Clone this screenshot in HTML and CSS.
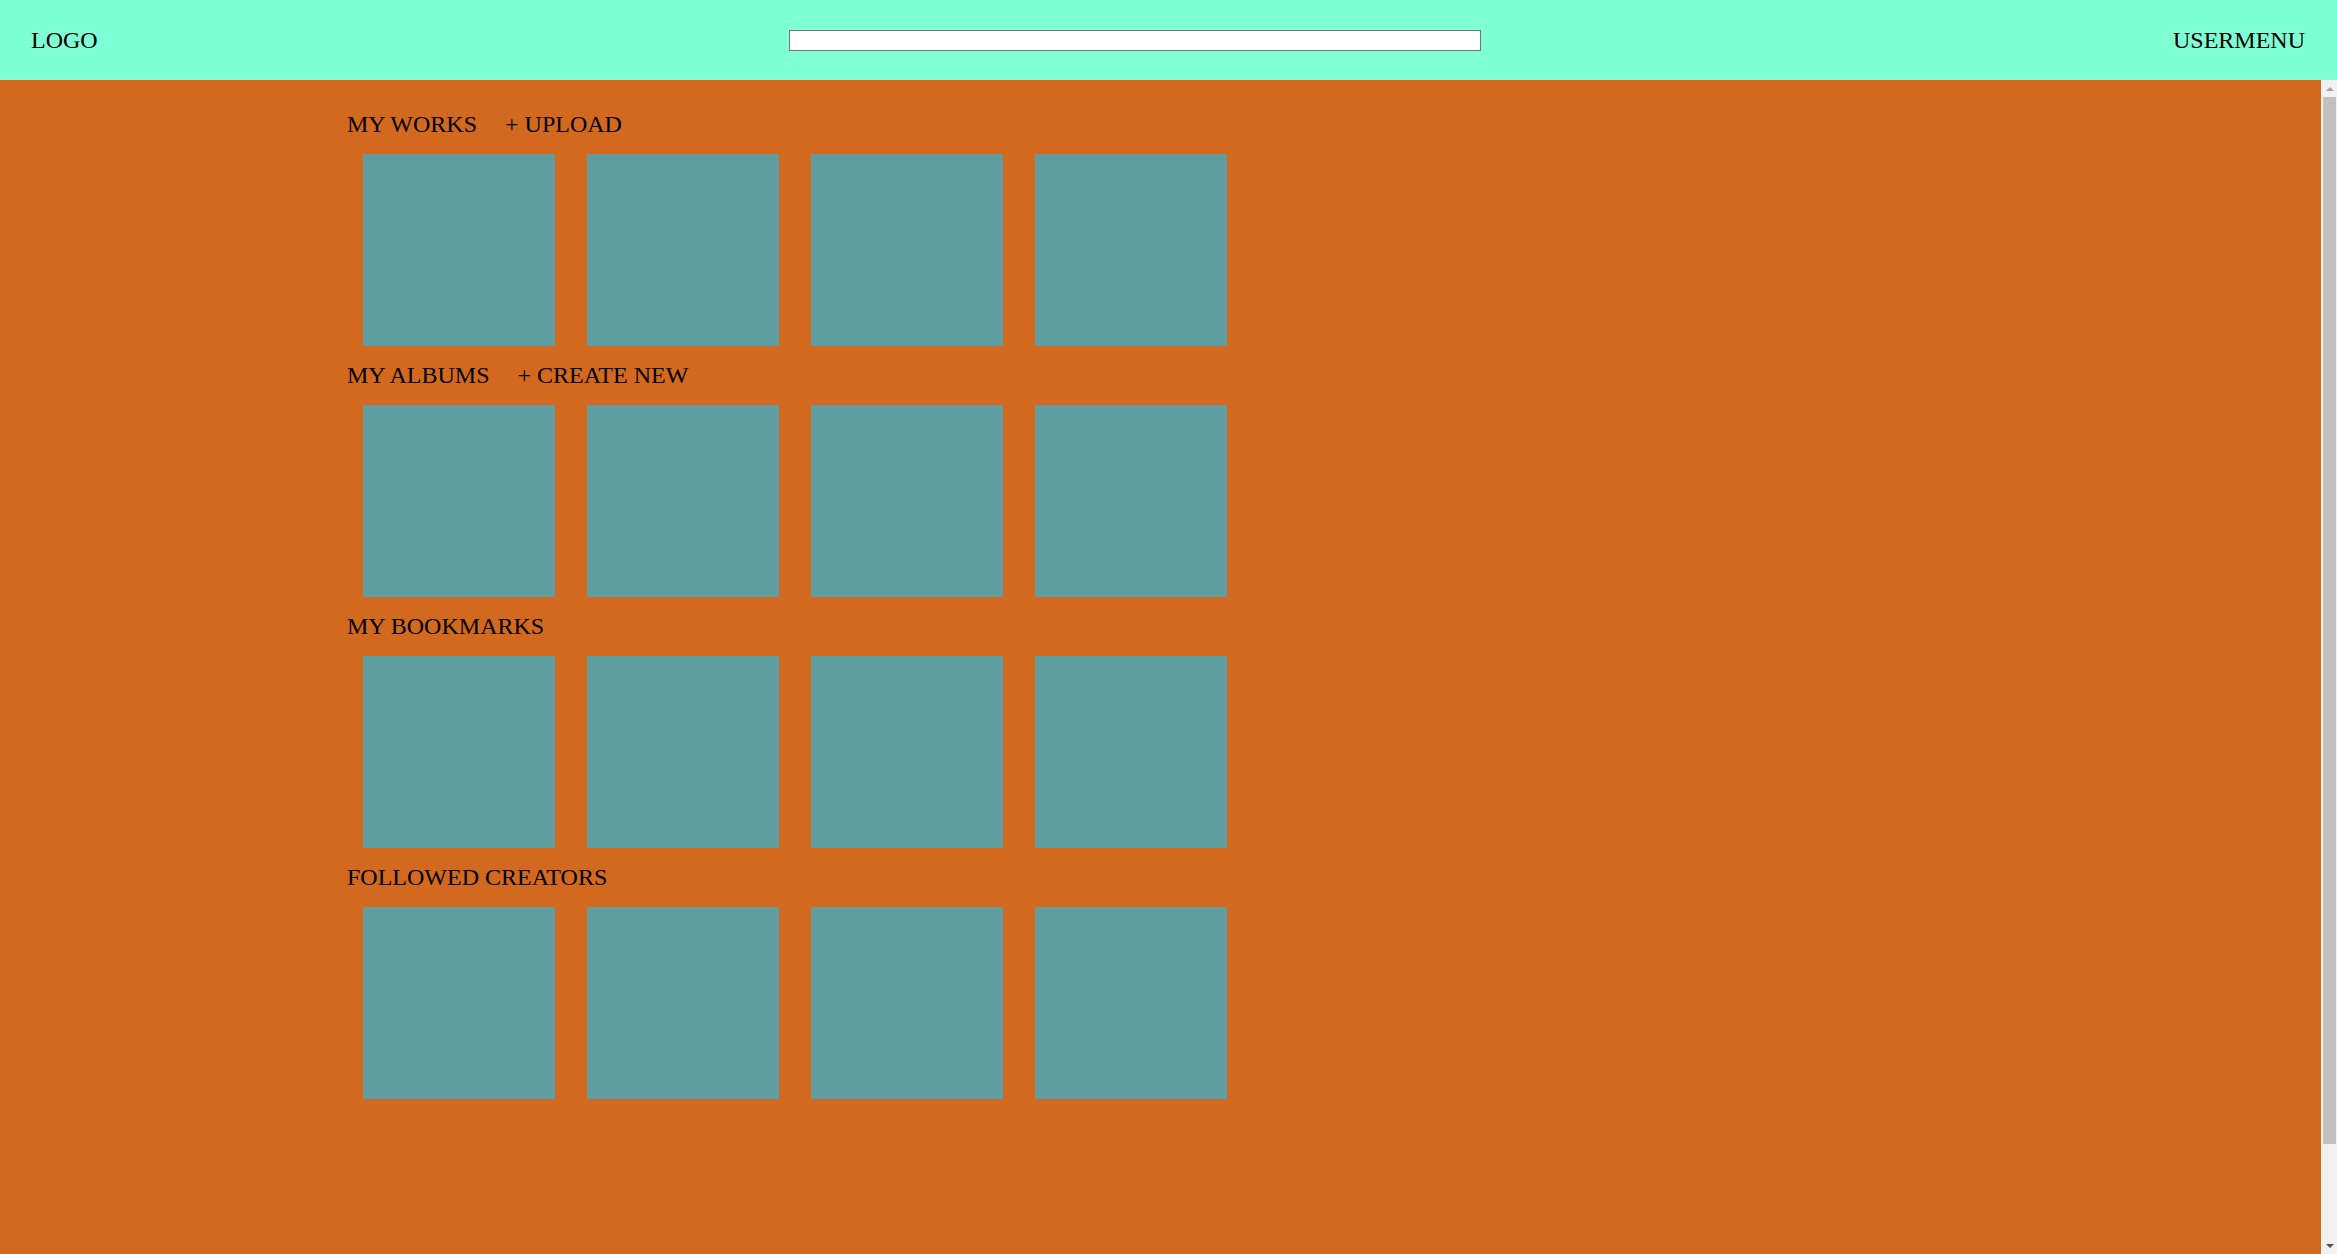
FILE: index.html
```html
<!DOCTYPE html>
<html lang="en">
<head>
<meta charset="utf-8">
<title>Dashboard</title>
<link rel="stylesheet" href="styles.css">
</head>
<body>
<header class="topbar">
  <div class="logo">LOGO</div>
  <input class="search" type="text">
  <div class="usermenu">USERMENU</div>
</header>
<div class="body-row">
  <main class="scroller">
    <div class="content">
      <section class="section">
        <div class="section-head"><span>MY WORKS</span><span>+ UPLOAD</span></div>
        <div class="tiles"><div class="tile"></div><div class="tile"></div><div class="tile"></div><div class="tile"></div></div>
      </section>
      <section class="section">
        <div class="section-head"><span>MY ALBUMS</span><span>+ CREATE NEW</span></div>
        <div class="tiles"><div class="tile"></div><div class="tile"></div><div class="tile"></div><div class="tile"></div></div>
      </section>
      <section class="section">
        <div class="section-head"><span>MY BOOKMARKS</span></div>
        <div class="tiles"><div class="tile"></div><div class="tile"></div><div class="tile"></div><div class="tile"></div></div>
      </section>
      <section class="section">
        <div class="section-head"><span>FOLLOWED CREATORS</span></div>
        <div class="tiles"><div class="tile"></div><div class="tile"></div><div class="tile"></div><div class="tile"></div></div>
      </section>
    </div>
  </main>
  <div class="scrollbar" aria-hidden="true">
    <div class="sb-btn sb-up"><span class="tri-up"></span></div>
    <div class="sb-thumb"></div>
    <div class="sb-track"></div>
    <div class="sb-btn sb-down"><span class="tri-down"></span></div>
  </div>
</div>
</body>
</html>
```
FILE: styles.css
```css
html, body {
  margin: 0;
  padding: 0;
  height: 100%;
  overflow: hidden;
}
body {
  font-family: "Liberation Serif", "Times New Roman", serif;
  font-size: 24px;
  color: #000;
  display: flex;
  flex-direction: column;
}
.topbar {
  height: 80px;
  flex: 0 0 80px;
  background: #7fffd4;
  display: flex;
  align-items: center;
  justify-content: space-between;
  padding: 0 32px 0 31px;
  box-sizing: border-box;
}
.search {
  width: 692px;
  height: 21px;
  box-sizing: border-box;
  margin: 0;
  border: 1px solid #767676;
  background: #fff;
  padding: 1px 2px;
  font-size: 13px;
}
.body-row {
  flex: 1 1 auto;
  display: flex;
  min-height: 0;
}
.scroller {
  flex: 1 1 auto;
  overflow: hidden;
  background: #d2691e;
}
.content {
  min-height: 1278px;
  box-sizing: border-box;
  padding: 31px 0 0 347px;
}
.section-head {
  display: flex;
  gap: 28px;
}
.tiles {
  display: flex;
}
.tile {
  width: 192px;
  height: 192px;
  margin: 16px;
  background: #5f9ea0;
}
.scrollbar {
  flex: 0 0 16px;
  width: 16px;
  background: #f1f1f1;
  display: flex;
  flex-direction: column;
}
.sb-btn {
  height: 17px;
  flex: 0 0 17px;
  display: flex;
  align-items: center;
  justify-content: center;
}
.tri-up {
  width: 0;
  height: 0;
  border-left: 4px solid transparent;
  border-right: 4px solid transparent;
  border-bottom: 4px solid #a3a3a3;
  margin-left: 1px;
}
.tri-down {
  width: 0;
  height: 0;
  border-left: 4px solid transparent;
  border-right: 4px solid transparent;
  border-top: 4px solid #505050;
  margin-left: 1px;
}
.sb-thumb {
  flex: 0 0 1047px;
  margin: 0 1px 0 2px;
  background: #c1c1c1;
}
.sb-track {
  flex: 1 1 auto;
}
```
